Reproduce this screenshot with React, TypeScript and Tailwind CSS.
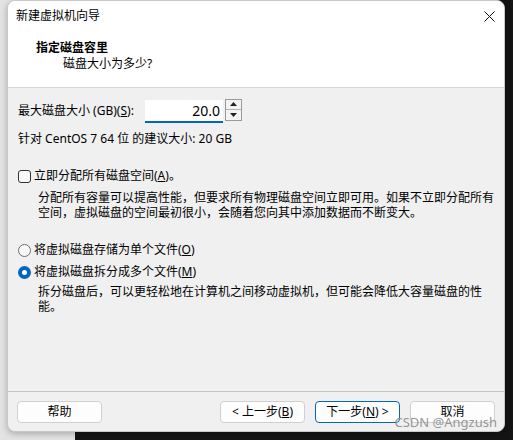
import {ReactNode} from "react";

function Btn({children, primary}: {children: ReactNode, primary?: boolean}) {
    return (
        <div className={"w-[85px] h-[22px] rounded-[4px] bg-[#fdfdfd] flex items-center justify-center text-[12px] " +
            (primary ? "border border-[#0067c0]" : "border border-[#d0d0d0]")}>
            {children}
        </div>
    );
}

function Radio({checked}: {checked?: boolean}) {
    return checked ?
        <div className="w-[13px] h-[13px] rounded-full bg-[#0067c0] flex items-center justify-center">
            <div className="w-[5px] h-[5px] rounded-full bg-white"></div>
        </div>
        :
        <div className="w-[13px] h-[13px] rounded-full border border-[#6e6e6e] bg-[#f8f8f8]"></div>;
}

export default function App() {
    return (
        <div className="w-[513px] h-[440px] overflow-hidden bg-[linear-gradient(to_right,#e3e3e3_75px,#141414_75px)] font-[family-name:'Noto_Sans','Noto_Sans_CJK_SC',sans-serif] text-black">
            <div className="relative ml-[7px] w-[498px] h-[432px] rounded-[8px] bg-[#f0f0f0] overflow-hidden border border-[#c8c8c8] shadow-[0_2px_6px_rgba(0,0,0,0.25)] flex flex-col">
                {/* titulo */}
                <div className="h-[30px] bg-white flex items-center justify-between pl-[8px] pr-[9px]">
                    <p className="text-[12px]">新建虚拟机向导</p>
                    <svg width="11" height="11" viewBox="0 0 11 11">
                        <path d="M0.5 0.5 L10.5 10.5 M10.5 0.5 L0.5 10.5" stroke="#111" strokeWidth="1" fill="none"/>
                    </svg>
                </div>
                {/* cabecalho */}
                <div className="h-[57px] bg-white border-b border-[#d6d6d6]">
                    <p className="text-[12px] font-bold leading-[16px] pl-[28px] pt-[9px]">指定磁盘容里</p>
                    <p className="text-[12px] leading-[16px] pl-[55px] pt-[0px]">磁盘大小为多少?</p>
                </div>
                {/* corpo */}
                <div className="flex-1 px-[10px] text-[12px]">
                    <div className="flex items-center mt-[11px] h-[24px]">
                        <p className="w-[127px] whitespace-nowrap">最大磁盘大小 (GB)(<span className="underline">S</span>):</p>
                        <div className="w-[78px] h-[23px] bg-white border-b-2 border-[#0067c0] flex items-center justify-end pr-[3px] text-[14px]">20.0</div>
                        <div className="ml-[2px] w-[17px] h-[22px] mb-[3px] border border-[#9a9a9a] bg-[#f3f3f3] flex flex-col">
                            <div className="flex-1 flex items-center justify-center border-b border-[#b4b4b4]">
                                <svg width="7" height="4" viewBox="0 0 7 4"><path d="M0 4 L3.5 0 L7 4 Z" fill="#222"/></svg>
                            </div>
                            <div className="flex-1 flex items-center justify-center">
                                <svg width="7" height="4" viewBox="0 0 7 4"><path d="M0 0 L3.5 4 L7 0 Z" fill="#222"/></svg>
                            </div>
                        </div>
                    </div>
                    <p className="mt-[8px] leading-[16px]">针对 CentOS 7 64 位 的建议大小: 20 GB</p>

                    <div className="flex items-center gap-[3px] mt-[21px] h-[16px]">
                        <div className="w-[13px] h-[13px] rounded-[3px] border border-[#333] bg-[#f8f8f8]"></div>
                        <p>立即分配所有磁盘空间(<span className="underline">A</span>)。</p>
                    </div>
                    <div className="pl-[20px] mt-[6px] leading-[15px] text-[12px] whitespace-nowrap">
                        <p>分配所有容量可以提高性能，但要求所有物理磁盘空间立即可用。如果不立即分配所有</p>
                        <p>空间，虚拟磁盘的空间最初很小，会随着您向其中添加数据而不断变大。</p>
                    </div>

                    <div className="flex items-center gap-[3px] mt-[22px] h-[16px]">
                        <Radio/>
                        <p>将虚拟磁盘存储为单个文件(<span className="underline">O</span>)</p>
                    </div>
                    <div className="flex items-center gap-[3px] mt-[6px] h-[16px]">
                        <Radio checked/>
                        <p>将虚拟磁盘拆分成多个文件(<span className="underline">M</span>)</p>
                    </div>
                    <div className="pl-[20px] mt-[4px] leading-[15px] text-[12px] whitespace-nowrap">
                        <p>拆分磁盘后，可以更轻松地在计算机之间移动虚拟机，但可能会降低大容量磁盘的性</p>
                        <p>能。</p>
                    </div>
                </div>
                {/* rodape */}
                <div className="border-t border-[#c4c4c4] pt-[9px] pb-[8px] px-[9px] flex justify-between">
                    <Btn>帮助</Btn>
                    <div className="flex gap-[10px]">
                        <Btn>&lt; 上一步(<span className="underline">B</span>)</Btn>
                        <Btn primary>下一步(<span className="underline">N</span>) &gt;</Btn>
                        <Btn>取消</Btn>
                    </div>
                </div>
                <p className="absolute right-[7px] bottom-[1px] text-[13px] text-[#8a8a8a]/90 leading-[16px]">CSDN @Angzush</p>
            </div>
        </div>
    );
}
